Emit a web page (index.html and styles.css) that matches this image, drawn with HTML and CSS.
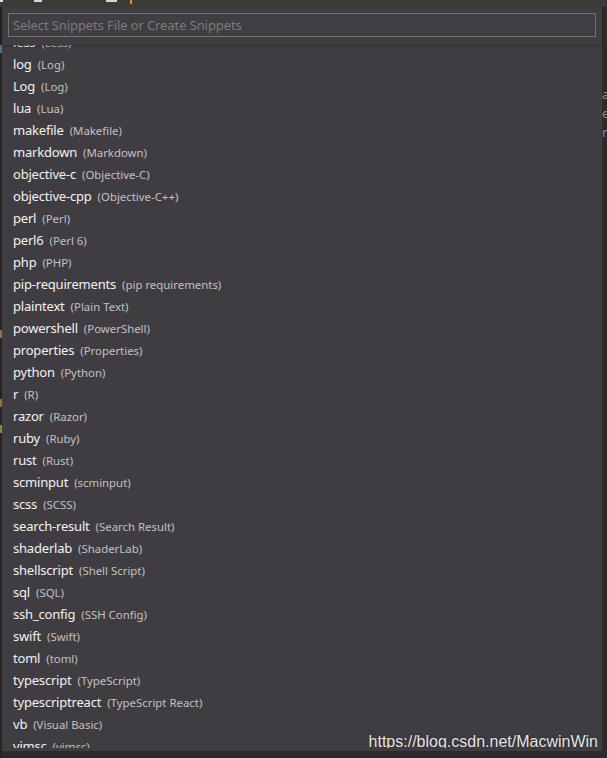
FILE: index.html
```html
<!DOCTYPE html>
<html>
<head>
<meta charset="utf-8">
<link rel="stylesheet" href="styles.css">
</head>
<body>
<div class="topbar">
  <span class="mark m1"></span><span class="mark m2"></span><span class="mark m3"></span><span class="mark m4"></span>
</div>
<div class="stage">
  <div class="gutter">
    <span class="gmark g1"></span><span class="gmark g2"></span><span class="gmark g3"></span><span class="gmark g4"></span>
  </div>
  <div class="picker">
    <div class="header">
      <div class="input">Select Snippets File or Create Snippets</div>
    </div>
    <div class="list">
      <div class="rows">
        <div class="row"><span class="label">less</span><span class="desc">(Less)</span></div>
        <div class="row"><span class="label">log</span><span class="desc">(Log)</span></div>
        <div class="row"><span class="label">Log</span><span class="desc">(Log)</span></div>
        <div class="row"><span class="label">lua</span><span class="desc">(Lua)</span></div>
        <div class="row"><span class="label">makefile</span><span class="desc">(Makefile)</span></div>
        <div class="row"><span class="label">markdown</span><span class="desc">(Markdown)</span></div>
        <div class="row"><span class="label">objective-c</span><span class="desc">(Objective-C)</span></div>
        <div class="row"><span class="label">objective-cpp</span><span class="desc">(Objective-C++)</span></div>
        <div class="row"><span class="label">perl</span><span class="desc">(Perl)</span></div>
        <div class="row"><span class="label">perl6</span><span class="desc">(Perl 6)</span></div>
        <div class="row"><span class="label">php</span><span class="desc">(PHP)</span></div>
        <div class="row"><span class="label">pip-requirements</span><span class="desc">(pip requirements)</span></div>
        <div class="row"><span class="label">plaintext</span><span class="desc">(Plain Text)</span></div>
        <div class="row"><span class="label">powershell</span><span class="desc">(PowerShell)</span></div>
        <div class="row"><span class="label">properties</span><span class="desc">(Properties)</span></div>
        <div class="row"><span class="label">python</span><span class="desc">(Python)</span></div>
        <div class="row"><span class="label">r</span><span class="desc">(R)</span></div>
        <div class="row"><span class="label">razor</span><span class="desc">(Razor)</span></div>
        <div class="row"><span class="label">ruby</span><span class="desc">(Ruby)</span></div>
        <div class="row"><span class="label">rust</span><span class="desc">(Rust)</span></div>
        <div class="row"><span class="label">scminput</span><span class="desc">(scminput)</span></div>
        <div class="row"><span class="label">scss</span><span class="desc">(SCSS)</span></div>
        <div class="row"><span class="label">search-result</span><span class="desc">(Search Result)</span></div>
        <div class="row"><span class="label">shaderlab</span><span class="desc">(ShaderLab)</span></div>
        <div class="row"><span class="label">shellscript</span><span class="desc">(Shell Script)</span></div>
        <div class="row"><span class="label">sql</span><span class="desc">(SQL)</span></div>
        <div class="row"><span class="label">ssh_config</span><span class="desc">(SSH Config)</span></div>
        <div class="row"><span class="label">swift</span><span class="desc">(Swift)</span></div>
        <div class="row"><span class="label">toml</span><span class="desc">(toml)</span></div>
        <div class="row"><span class="label">typescript</span><span class="desc">(TypeScript)</span></div>
        <div class="row"><span class="label">typescriptreact</span><span class="desc">(TypeScript React)</span></div>
        <div class="row"><span class="label">vb</span><span class="desc">(Visual Basic)</span></div>
        <div class="row"><span class="label">vimsc</span><span class="desc">(vimsc)</span></div>
      </div>
      <div class="watermark">https://blog.csdn.net/MacwinWin</div>
    </div>
  </div>
  <div class="side">
    <span>a</span><span>e</span><span>r</span>
  </div>
</div>
</body>
</html>
```
FILE: styles.css
```css
html, body {
  margin: 0;
  padding: 0;
}
body {
  width: 607px;
  height: 758px;
  overflow: hidden;
  background: #2a2a2a;
  font-family: "Noto Sans", "Open Sans", sans-serif;
}
.topbar {
  height: 7px;
  background: #3c3b37;
  position: relative;
}
.mark {
  position: absolute;
  top: 0;
  height: 2px;
  background: #d8d8d8;
}
.m1 { left: 0; width: 3px; }
.m2 { left: 34px; width: 8px; }
.m3 { left: 106px; width: 11px; }
.m4 { left: 130px; width: 2px; height: 4px; background: #e0902a; }

.stage {
  display: flex;
  height: 751px;
}
.gutter {
  width: 2px;
  background: #252525;
  position: relative;
}
.gmark {
  position: absolute;
  left: 0;
  width: 2px;
  height: 8px;
}
.g1 { top: 38px; background: #4a6ea0; }
.g2 { top: 323px; background: #9a7030; }
.g3 { top: 392px; background: #9a7030; }
.g4 { top: 418px; background: #8a8a30; }

.picker {
  width: 600px;
  background: #3f3d41;
  display: flex;
  flex-direction: column;
  padding-bottom: 3px;
  box-sizing: border-box;
  height: 744px;
}
.header {
  padding: 6px 6px 8px 6px;
  box-shadow: 0 1px 3px rgba(0,0,0,0.25);
  position: relative;
  z-index: 1;
  background: #3f3d41;
}
.input {
  height: 24px;
  box-sizing: border-box;
  border: 1px solid #727272;
  background: #403e42;
  color: #7b7b7b;
  font-size: 13px;
  line-height: 22px;
  padding-left: 4px;
  white-space: nowrap;
  letter-spacing: -0.1px;
}
.list {
  flex: 1;
  overflow: hidden;
  position: relative;
}
.rows {
  margin-top: -15px;
}
.row {
  height: 22px;
  line-height: 22px;
  padding-left: 11px;
  white-space: nowrap;
}
.label {
  color: #f2f2f2;
  font-size: 13px;
  letter-spacing: -0.2px;
}
.desc {
  color: #c2c2c2;
  font-size: 11.4px;
  margin-left: 6px;
}
.watermark {
  position: absolute;
  right: 4px;
  bottom: -3px;
  font-family: "Liberation Sans", Arial, sans-serif;
  font-size: 16px;
  color: #e6e6e6;
  text-shadow: 0 0 2px rgba(0,0,0,0.6);
}
.side {
  flex: 1;
  background: #2b2b2b;
  display: flex;
  flex-direction: column;
  padding-top: 78px;
  overflow: hidden;
  font-family: "Noto Sans", sans-serif;
  font-size: 13px;
  line-height: 19px;
  color: #8a8a8a;
}
```
